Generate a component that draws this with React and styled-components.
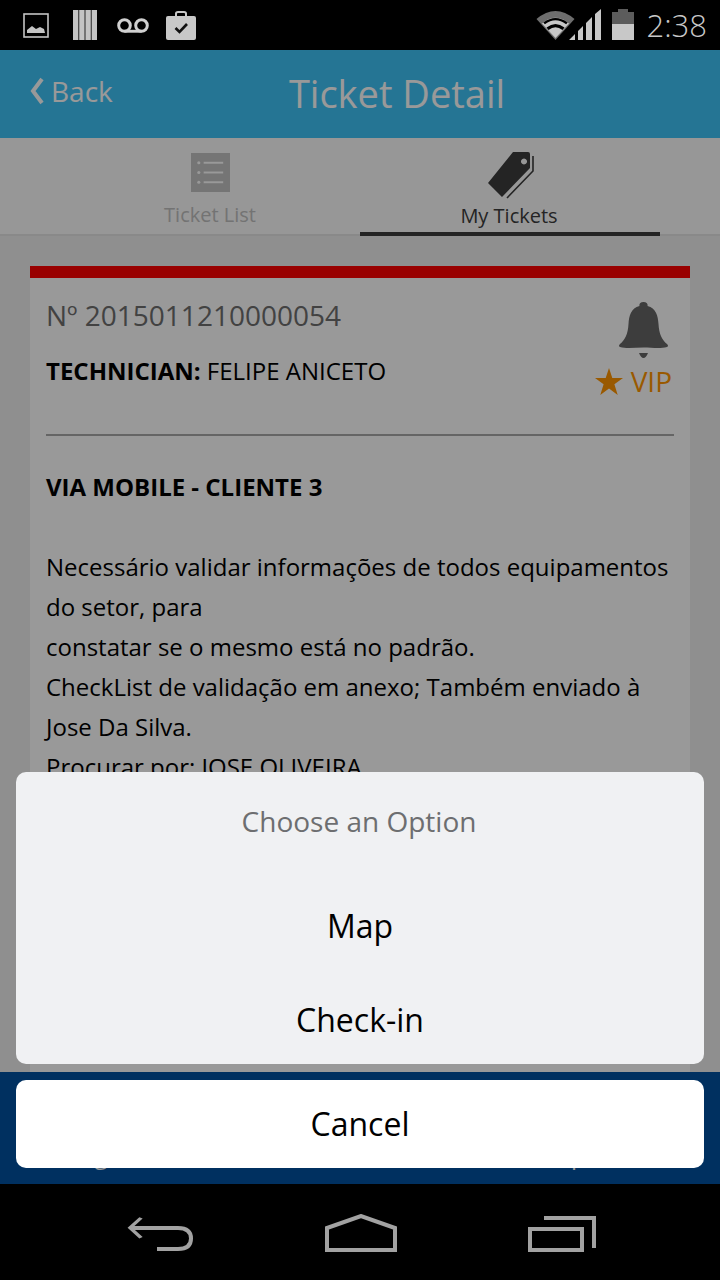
import React from "react";
import styled, { createGlobalStyle } from "styled-components";

const Global = createGlobalStyle`
  html, body { margin: 0; padding: 0; background: #000; }
  body { font-family: "Open Sans", "Noto Sans", sans-serif; }
  * { box-sizing: border-box; }
`;

const Phone = styled.div`
  width: 720px;
  height: 1280px;
  display: flex;
  flex-direction: column;
  overflow: hidden;
  background: #000;
`;

const StatusBar = styled.div`
  height: 50px;
  flex: none;
  display: flex;
  align-items: center;
  justify-content: space-between;
  padding: 0 13px 0 23px;
  background: #000;
`;

const NoticeIcons = styled.div`
  display: flex;
  align-items: center;
  svg:nth-child(1) { margin-right: 24px; }
  svg:nth-child(2) { margin-right: 20px; }
  svg:nth-child(3) { margin-right: 17px; }
`;

const SystemIcons = styled.div`
  display: flex;
  align-items: center;
  svg:nth-child(1) { margin-right: -6px; }
  svg:nth-child(2) { margin-right: 9px; }
  svg:nth-child(3) { margin-right: 13px; }
`;

const Clock = styled.span`
  font-size: 31px;
  color: #c8c8c8;
  font-weight: 300;
  line-height: 50px;
`;

const Screen = styled.div`
  position: relative;
  height: 1134px;
  flex: none;
  display: flex;
  flex-direction: column;
  background: #eeeeee;
  overflow: hidden;
`;

const Header = styled.header`
  height: 88px;
  flex: none;
  position: relative;
  display: flex;
  align-items: center;
  justify-content: center;
  background: #3fc4f7;
  color: #fff;
`;

const BackLink = styled.div`
  position: absolute;
  left: 30px;
  top: 23px;
  display: flex;
  align-items: center;
  gap: 7px;
  font-size: 28px;
  line-height: 36px;
`;

const Title = styled.h1`
  margin: 0 0 2px 74px;
  font-size: 38px;
  font-weight: 400;
  line-height: 86px;
`;

const Tabs = styled.nav`
  height: 98px;
  flex: none;
  display: flex;
  padding-left: 60px;
  background: #fcfcfc;
  border-bottom: 2px solid #e4e4e4;
`;

const Tab = styled.div`
  width: 300px;
  height: 98px;
  padding-right: ${(p) => (p.$active ? 2 : 0)}px;
  display: flex;
  flex-direction: column;
  align-items: center;
  color: ${(p) => (p.$active ? "#3c3c3c" : "#c0c0c0")};
  border-bottom: ${(p) => (p.$active ? "4px solid #3c3c3c" : "none")};
  font-size: 20px;
  line-height: 28px;
`;

const TabIcon = styled.div`
  height: ${(p) => (p.$active ? 64 : 63)}px;
  padding-top: ${(p) => (p.$active ? 13 : 15)}px;
  margin-left: ${(p) => (p.$active ? 4 : 0)}px;
  flex: none;
`;

const Card = styled.section`
  margin: 30px 30px 0;
  background: #ffffff;
  border-top: 12px solid #ff0000;
  padding: 16px 16px 0;
  flex: 1;
`;

const CardTop = styled.div`
  display: flex;
  justify-content: space-between;
  height: 142px;
  border-bottom: 2px solid #a8a8a8;
`;

const TicketNo = styled.div`
  font-size: 28px;
  line-height: 42px;
  color: #6f6f6f;
`;

const Technician = styled.div`
  font-size: 24px;
  line-height: 34px;
  margin-top: 18px;
  color: #000;
  b { font-weight: 700; }
`;

const Marks = styled.div`
  display: flex;
  flex-direction: column;
  align-items: flex-end;
  padding-right: 2px;
`;

const BellWrap = styled.div`
  height: 67px;
  padding: 8px 3px 0 0;
`;

const Vip = styled.div`
  display: flex;
  align-items: center;
  gap: 8px;
  font-size: 28px;
  line-height: 40px;
  color: #ff9500;
`;

const Subject = styled.p`
  margin: 31px 0 40px;
  font-size: 24px;
  line-height: 40px;
  font-weight: 700;
`;

const Body = styled.p`
  margin: 0;
  font-size: 24px;
  line-height: 40px;
  color: #000;
`;

const Footer = styled.footer`
  position: absolute;
  left: 0;
  right: 0;
  bottom: 0;
  height: 112px;
  background: #0050a0;
  color: #fff;
  font-size: 24px;
`;

const FooterRow = styled.div`
  display: flex;
  justify-content: space-between;
  padding: 65px 121px 0 76px;
  line-height: 36px;
`;

const Dim = styled.div`
  position: absolute;
  inset: 0;
  background: rgba(0, 0, 0, 0.4);
`;

const Sheet = styled.div`
  position: absolute;
  left: 16px;
  right: 16px;
  bottom: 16px;
  display: flex;
  flex-direction: column;
  gap: 16px;
`;

const OptionBox = styled.div`
  background: #f0f1f3;
  border-radius: 10px;
  height: 292px;
  display: flex;
  flex-direction: column;
  align-items: center;
`;

const SheetTitle = styled.div`
  font-size: 28px;
  line-height: 40px;
  margin-top: 29px;
  margin-left: -2px;
  color: #6d6e70;
`;

const Option = styled.div`
  font-size: 32px;
  line-height: 44px;
  color: #000;
  margin-top: ${(p) => p.$top}px;
`;

const CancelBox = styled.div`
  background: #fff;
  border-radius: 10px;
  height: 88px;
  padding-bottom: 2px;
  display: flex;
  align-items: center;
  justify-content: center;
  font-size: 32px;
  color: #000;
`;

const NavBar = styled.div`
  height: 96px;
  flex: none;
  display: flex;
  align-items: flex-end;
  justify-content: space-between;
  background: #000;
  padding: 0 124px 28px 127px;
`;

const Gallery = () => (
  <svg width="26" height="25" viewBox="0 0 26 25">
    <rect x="1" y="1" width="24" height="23" fill="none" stroke="#c4c4c4" strokeWidth="1.6" />
    <path d="M4 20 L4 17 L9 13 L13 16 L17 14 L21 16 L22 20 Z" fill="#c4c4c4" />
  </svg>
);

const Books = () => (
  <svg width="24" height="30" viewBox="0 0 24 30">
    <path d="M0 0h5.4v30H0zM6.2 0h5.4v30H6.2zM12.4 0h5.4v30h-5.4zM18.6 0H24v30h-5.4z" fill="#c4c4c4" />
  </svg>
);

const Voicemail = () => (
  <svg width="32" height="15" viewBox="0 0 32 15">
    <circle cx="7.5" cy="7.5" r="5.8" fill="none" stroke="#d0d0d0" strokeWidth="3" />
    <circle cx="24.5" cy="7.5" r="5.8" fill="none" stroke="#d0d0d0" strokeWidth="3" />
    <path d="M7.5 11.8h17v2.9h-17z" fill="#d0d0d0" />
  </svg>
);

const Bag = () => (
  <svg width="30" height="29" viewBox="0 0 30 29">
    <path d="M10 5V2.5Q10 1 12 1H18Q20 1 20 2.5V5" fill="none" stroke="#c8c8c8" strokeWidth="2" />
    <rect x="0" y="5" width="30" height="24" rx="2" fill="#c8c8c8" />
    <path d="M9.5 17l4 4 7.5-8" fill="none" stroke="#111" strokeWidth="2.6" />
  </svg>
);

const Wifi = () => (
  <svg width="39" height="30" viewBox="0 0 38 30">
    <path d="M0 9 Q19 -7 38 9 L19 30 Z" fill="#6e6e6e" />
    <path d="M5.5 13.5 Q19 2 32.5 13.5 L19 28 Z" fill="#c8c8c8" />
    <path d="M10 17.5 Q19 10.5 28 17.5 L26 20 Q19 14.5 12 20 Z" fill="#000" />
    <path d="M6.8 12.5 Q19 3.5 31.2 12.5 L29.6 14.2 Q19 6.5 8.4 14.2 Z" fill="#000" />
  </svg>
);

const Signal = () => (
  <svg width="34" height="32" viewBox="0 0 34 32">
    <path d="M0 31 L6 25 V31 Z M9 22 L14 17 V31 H9 Z M17 14 L23 8 V31 H17 Z M26 5 L32 0 V31 H26 Z" fill="#c8c8c8" />
  </svg>
);

const Battery = () => (
  <svg width="22" height="32" viewBox="0 0 22 32">
    <path d="M6 0h10v3h6v12H0V3h6z" fill="#5c5c5c" />
    <path d="M0 15h22v16H0z" fill="#c8c8c8" />
  </svg>
);

const Chevron = () => (
  <svg width="14" height="28" viewBox="0 0 14 28">
    <path d="M12 2L3 14L12 26" fill="none" stroke="#fff" strokeWidth="4" />
  </svg>
);

const ListIcon = () => (
  <svg width="39" height="39" viewBox="0 0 40 40">
    <rect width="40" height="40" fill="#c4c4c4" />
    <g fill="#fff">
      <circle cx="8" cy="10" r="1.6" />
      <circle cx="8" cy="20" r="1.6" />
      <circle cx="8" cy="30" r="1.6" />
      <rect x="13" y="9" width="20" height="2" />
      <rect x="13" y="19" width="20" height="2" />
      <rect x="13" y="29" width="20" height="2" />
    </g>
  </svg>
);

const TagIcon = () => (
  <svg width="48" height="48" viewBox="0 0 48 48">
    <path fillRule="evenodd" d="M26 1H41Q43 1 43 3V17L15 46L1 32Z M37 7.5a3 3 0 1 0 .01 0Z" fill="#3c3c3c" />
    <path d="M46 5V20L20 47" fill="none" stroke="#3c3c3c" strokeWidth="1.6" />
  </svg>
);

const BellIcon = () => (
  <svg width="50" height="56" viewBox="0 0 50 56">
    <path
      d="M24.5 0C21 0 20 2 20.5 4C12 6 10 14 9.5 22C9 32 6 38 1 42Q-1 44 1 45C8 47 16 45.5 24.5 45.5C33 45.5 41 47 48 45Q50 44 48 42C43 38 40 32 39.5 22C39 14 37 6 28.5 4C29 2 28 0 24.5 0Z M20 51H29Q27 56 24.5 56Q22 56 20 51Z"
      fill="#666"
    />
  </svg>
);

const StarIcon = () => (
  <svg width="28" height="27" viewBox="0 0 28 27">
    <path d="M14 0L17.3 10H28L19.4 16.3L22.7 27L14 20.4L5.3 27L8.6 16.3L0 10H10.7Z" fill="#ff9500" />
  </svg>
);

const BackArrow = () => (
  <svg width="66" height="36" viewBox="0 0 66 36">
    <path d="M14 1L3 17L14 33" transform="scale(1 .62) translate(0 2)" fill="none" stroke="#a2a2a2" strokeWidth="4" />
    <path d="M3 12H51Q64 12 64 22.5Q64 33 51 33H30" fill="none" stroke="#a2a2a2" strokeWidth="4" />
  </svg>
);

const HomeIcon = () => (
  <svg width="72" height="38" viewBox="0 0 72 38">
    <path d="M2 36V14L36 2L70 14V36Z" fill="none" stroke="#a2a2a2" strokeWidth="4" />
  </svg>
);

const RecentIcon = () => (
  <svg width="68" height="36" viewBox="0 0 68 36">
    <rect x="2" y="13" width="52" height="21" fill="none" stroke="#a2a2a2" strokeWidth="4" />
    <path d="M16 2H66V32" fill="none" stroke="#a2a2a2" strokeWidth="4" />
  </svg>
);

export default function App() {
  return (
    <Phone>
      <Global />
      <StatusBar>
        <NoticeIcons>
          <Gallery />
          <Books />
          <Voicemail />
          <Bag />
        </NoticeIcons>
        <SystemIcons>
          <Wifi />
          <Signal />
          <Battery />
          <Clock>2:38</Clock>
        </SystemIcons>
      </StatusBar>

      <Screen>
        <Header>
          <BackLink>
            <Chevron />
            Back
          </BackLink>
          <Title>Ticket Detail</Title>
        </Header>
        <Tabs>
          <Tab>
            <TabIcon><ListIcon /></TabIcon>
            Ticket List
          </Tab>
          <Tab $active>
            <TabIcon $active><TagIcon /></TabIcon>
            My Tickets
          </Tab>
        </Tabs>
        <Card>
          <CardTop>
            <div>
              <TicketNo>Nº 2015011210000054</TicketNo>
              <Technician><b>TECHNICIAN:</b> FELIPE ANICETO</Technician>
            </div>
            <Marks>
              <BellWrap><BellIcon /></BellWrap>
              <Vip><StarIcon />VIP</Vip>
            </Marks>
          </CardTop>
          <Subject>VIA MOBILE - CLIENTE 3</Subject>
          <Body>
            Necessário validar informações de todos equipamentos do setor, para
            <br />
            constatar se o mesmo está no padrão.
            <br />
            CheckList de validação em anexo; Também enviado à Jose Da Silva.
            <br />
            Procurar por: JOSE OLIVEIRA
          </Body>
        </Card>
        <Footer>
          <FooterRow>
            <span>Ligar</span>
            <span>Mapa</span>
          </FooterRow>
        </Footer>
        <Dim />
        <Sheet>
          <OptionBox>
            <SheetTitle>Choose an Option</SheetTitle>
            <Option $top={63}>Map</Option>
            <Option $top={50}>Check-in</Option>
          </OptionBox>
          <CancelBox>Cancel</CancelBox>
        </Sheet>
      </Screen>

      <NavBar>
        <BackArrow />
        <HomeIcon />
        <RecentIcon />
      </NavBar>
    </Phone>
  );
}
